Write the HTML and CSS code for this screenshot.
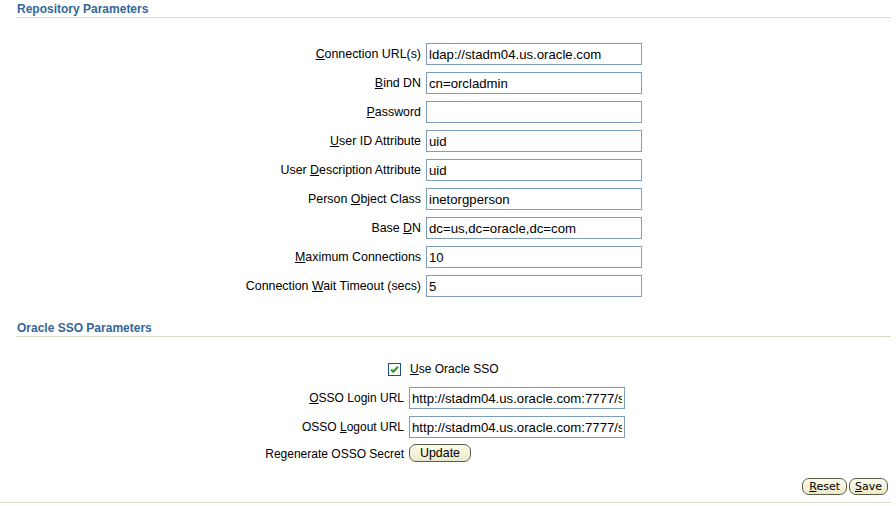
FILE: index.html
```html
<!DOCTYPE html>
<html lang="en">
<head>
    <meta charset="UTF-8">
    <title>Identity Management - Oracle Internet Directory</title>
    <link rel="stylesheet" href="styles.css">
</head>
<body>

    <div class="page">
        <h2 class="section-title">Repository Parameters</h2>
        <div class="form-grid repo">
            <label class="field-label"><u>C</u>onnection URL(s)</label>
            <input class="field" type="text" value="ldap://stadm04.us.oracle.com">

            <label class="field-label"><u>B</u>ind DN</label>
            <input class="field" type="text" value="cn=orcladmin">

            <label class="field-label"><u>P</u>assword</label>
            <input class="field" type="password" value="">

            <label class="field-label"><u>U</u>ser ID Attribute</label>
            <input class="field" type="text" value="uid">

            <label class="field-label">User <u>D</u>escription Attribute</label>
            <input class="field" type="text" value="uid">

            <label class="field-label">Person <u>O</u>bject Class</label>
            <input class="field" type="text" value="inetorgperson">

            <label class="field-label">Base <u>D</u>N</label>
            <input class="field" type="text" value="dc=us,dc=oracle,dc=com">

            <label class="field-label"><u>M</u>aximum Connections</label>
            <input class="field" type="text" value="10">

            <label class="field-label">Connection <u>W</u>ait Timeout (secs)</label>
            <input class="field" type="text" value="5">
        </div>

        <h2 class="section-title sso-title">Oracle SSO Parameters</h2>
        <div class="form-grid sso">
            <div class="check-cell">
                <span class="checkbox">
                    <svg width="13" height="13" viewBox="0 0 13 13">
                        <rect x="0.5" y="0.5" width="12" height="12" fill="#ffffff" stroke="#1c5180"/>
                        <path d="M3 6.5 L5.2 8.8 L10 3.8" fill="none" stroke="#21a121" stroke-width="2"/>
                    </svg>
                </span>
            </div>
            <label class="check-label"><u>U</u>se Oracle SSO</label>

            <label class="field-label"><u>O</u>SSO Login URL</label>
            <input class="field" type="text" value="http://stadm04.us.oracle.com:7777/sso/jsp/login.jsp">

            <label class="field-label">OSSO <u>L</u>ogout URL</label>
            <input class="field" type="text" value="http://stadm04.us.oracle.com:7777/sso/jsp/logout.jsp">

            <label class="field-label">Regenerate OSSO Secret</label>
            <div class="btn-cell">
                <button class="btn update-btn">Update</button>
            </div>
        </div>

        <div class="actions">
            <button class="btn action-btn reset-btn"><u>R</u>eset</button>
            <button class="btn action-btn"><u>S</u>ave</button>
        </div>
    </div>
    <div class="footer-line"></div>

</body>
</html>
```

FILE: styles.css
```css
body {
    margin: 0;
    background-color: #ffffff;
    color: #000000;
    font-family: "Liberation Sans", Arial, sans-serif;
    font-size: 12px;
}
.page {
    padding: 0 5px 0 16px;
}
.section-title {
    margin: 0;
    padding: 2px 0 1px 1px;
    font-size: 12px;
    line-height: 14px;
    font-weight: bold;
    color: #336699;
    border-bottom: 1px solid #d8dcc2;
}
.sso-title {
    margin-top: 22px;
}
.form-grid {
    display: grid;
    column-gap: 5px;
    row-gap: 7px;
    align-items: center;
}
.repo {
    margin-top: 25px;
    grid-template-columns: 405px 216px;
    grid-auto-rows: 22px;
}
.repo .field-label {
    font-size: 12.4px;
}
.sso {
    margin-top: 21px;
    grid-template-columns: 388px 216px;
    grid-template-rows: 22px 22px 22px 18px;
}
.field-label {
    text-align: right;
    white-space: nowrap;
}
.field {
    box-sizing: border-box;
    width: 216px;
    height: 22px;
    margin: 0;
    padding: 0 2px;
    border: 1px solid #7f9db9;
    font-family: "Liberation Sans", Arial, sans-serif;
    font-size: 13.2px;
    color: #000000;
    background-color: #ffffff;
    outline: none;
}
.check-cell {
    display: flex;
    justify-content: flex-end;
    padding-right: 3px;
}
.checkbox {
    display: flex;
}
.check-label {
    padding-left: 1px;
}
.btn-cell {
    display: flex;
    margin-top: -2px;
}
.btn {
    box-sizing: border-box;
    margin: 0;
    height: 17px;
    padding: 0 8px;
    border: 1px solid #5b5b45;
    border-radius: 7px;
    background: linear-gradient(#fbfbec, #eceacb);
    color: #000000;
    cursor: pointer;
}
.update-btn {
    width: 62px;
    height: 18px;
    font-family: "Liberation Sans", Arial, sans-serif;
    font-size: 12.4px;
    line-height: 14px;
}
.actions {
    display: flex;
    justify-content: flex-end;
    gap: 2px;
    margin-top: 15px;
    padding-right: 3px;
}
.action-btn {
    font-family: "DejaVu Sans", Tahoma, sans-serif;
    font-size: 11px;
    line-height: 13px;
    padding: 0 5px;
}
.reset-btn {
    padding: 0 6px;
}
.footer-line {
    margin: 7px 5px 0 0;
    border-top: 1px solid #d8dcc2;
}
```
